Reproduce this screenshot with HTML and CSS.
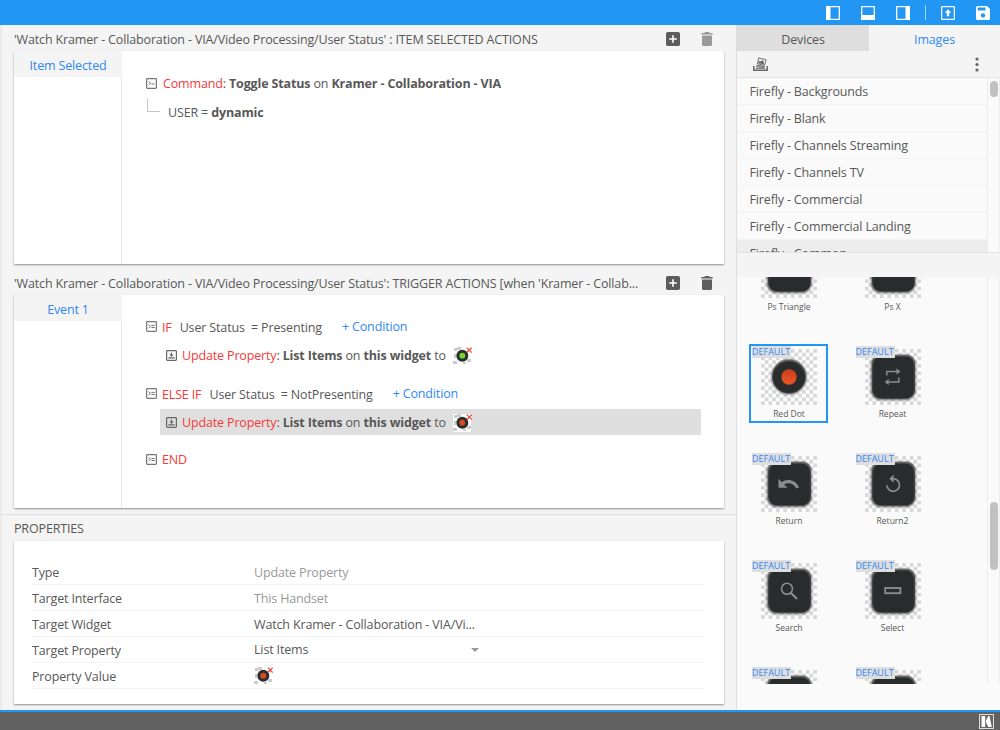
FILE: index.html
```html
<!DOCTYPE html>
<html lang="en">
<head>
<meta charset="utf-8">
<title>Builder</title>
<link rel="stylesheet" href="styles.css">
</head>
<body>
<svg class="defs" width="0" height="0" aria-hidden="true">
  <defs>
    <pattern id="check" width="7.46" height="7.46" patternUnits="userSpaceOnUse">
      <rect width="7.46" height="7.46" fill="#fff"/>
      <rect width="3.73" height="3.73" fill="#d8d8d8"/>
      <rect x="3.73" y="3.73" width="3.73" height="3.73" fill="#d8d8d8"/>
    </pattern>
    <linearGradient id="rim" x1="0" y1="0" x2="0" y2="1">
      <stop offset="0" stop-color="#666"/><stop offset=".3" stop-color="#444"/><stop offset="1" stop-color="#3c3e3e"/>
    </linearGradient>
    <linearGradient id="glow" x1="0" y1="0" x2="0" y2="1">
      <stop offset="0" stop-color="#c8401c"/><stop offset="1" stop-color="#ee5424"/>
    </linearGradient>
    <filter id="soft" x="-20%" y="-20%" width="140%" height="140%"><feGaussianBlur stdDeviation=".9"/></filter>
    <symbol id="key" viewBox="0 0 56 56">
      <rect width="56" height="56" fill="url(#check)"/>
      <rect x="6" y="6" width="44.500" height="45" rx="9" fill="#444" opacity=".85" filter="url(#soft)"/>
      <rect x="7" y="5.800" width="43" height="43" rx="8.500" fill="url(#rim)"/>
      <rect x="8.300" y="7.500" width="40.400" height="42" rx="8" fill="#282c2d"/>
    </symbol>
    <symbol id="add" viewBox="0 0 14 14">
      <rect width="14" height="14" rx="1.800" fill="#5c5c5c"/><path d="M7 3.200v7.600M3.200 7h7.600" stroke="#fff" stroke-width="1.600"/>
    </symbol>
    <symbol id="trash" viewBox="0 0 12 14">
      <path d="M.3.9h3L4.200 0h3.600l.9.9h3v1.600H.3zM1 3.500h10v9A1.500 1.500 0 0 1 9.500 14h-7A1.500 1.500 0 0 1 1 12.500z" fill="currentColor"/>
    </symbol>
    <symbol id="cmd" viewBox="0 0 11 11">
      <rect x=".6" y=".6" width="9.800" height="9.800" rx=".8" fill="#fff" stroke="#777" stroke-width="1.200"/>
      <path d="M2.600 3.600 4.600 5.300 2.600 7M5.500 6h3" fill="none" stroke="#777"/>
    </symbol>
    <symbol id="logic" viewBox="0 0 11 11">
      <rect x=".6" y=".6" width="9.800" height="9.800" rx=".8" fill="#fff" stroke="#777" stroke-width="1.200"/>
      <path d="M2.500 3.600 4.600 5.300 2.500 7M5.400 4.400h3.400M5.400 6.500h3.400" fill="none" stroke="#777"/>
    </symbol>
    <symbol id="prop" viewBox="0 0 11 11">
      <rect x=".6" y=".6" width="9.800" height="9.800" rx=".8" fill="none" stroke="#666" stroke-width="1.200"/>
      <path d="M2.300 7.800h6.400M5.500 2.500v2.500" stroke="#666" stroke-width="1.200"/><path d="M3.300 4.500h4.400L5.500 7z" fill="#666"/>
    </symbol>
    <symbol id="dot" viewBox="0 0 19 19">
      <rect x="0" y="1" width="18" height="18" fill="#fff"/>
      <path d="M1 2h3v3H1zM4 1h4v3H4zM1 8h2v4H1zM0 15h4v3H0zM14 13h4v3h-4zM10 16h3v2h-3z" fill="#ccc"/>
      <circle cx="9.300" cy="9.700" r="6" fill="#2c2f30"/><circle cx="9.300" cy="9.700" r="2.900" fill="currentColor"/>
      <path d="m13.800 1.600 4.900 4.900m0-4.900-4.900 4.900" stroke="#ef4438" stroke-width="1.200"/>
    </symbol>
  </defs>
</svg>

<header class="topbar">
  <svg width="14" height="14" viewBox="0 0 14 14"><path fill="none" stroke="#fff" stroke-width="1.300" d="M.7.7h12.600v12.600H.7z"/><path fill="#fff" d="M0 0h4.500v14H0z"/></svg>
  <svg width="14" height="14" viewBox="0 0 14 14"><path fill="none" stroke="#fff" stroke-width="1.300" d="M.7.7h12.600v12.600H.7z"/><path fill="#fff" d="M0 9h14v5H0z"/></svg>
  <svg width="14" height="14" viewBox="0 0 14 14"><path fill="none" stroke="#fff" stroke-width="1.300" d="M.7.7h12.600v12.600H.7z"/><path fill="#fff" d="M9.500 0H14v14H9.500z"/></svg>
  <span class="topbar-divider"></span>
  <svg width="14" height="14" viewBox="0 0 14 14"><rect x=".6" y=".6" width="12.800" height="12.800" rx="1" fill="none" stroke="#fff" stroke-width="1.300"/><path fill="#fff" d="M7 3.200 10.300 6.800H8.200v3.400H5.800V6.800H3.700z"/></svg>
  <svg width="14" height="14" viewBox="0 0 14 14"><path fill="#fff" fill-rule="evenodd" d="M1.500 0H11l3 3v9.500a1.500 1.500 0 0 1-1.500 1.500h-11A1.500 1.500 0 0 1 0 12.500v-11A1.500 1.500 0 0 1 1.500 0zM1.700 1.600v3h7.700v-3zM7 7.200a2.200 2.200 0 1 0 .01 0z"/></svg>
</header>

<main class="main">
  <section class="workspace">
    <div class="section-head">
      <h2 class="title">'Watch Kramer - Collaboration - VIA/Video Processing/User Status' : ITEM SELECTED ACTIONS</h2>
      <svg class="ic-add"><use href="#add"/></svg><svg class="ic-trash disabled"><use href="#trash"/></svg>
    </div>
    <div class="panel">
      <div class="tabs-col"><div class="tab">Item Selected</div></div>
      <div class="actions first">
        <div class="line"><svg class="ic"><use href="#cmd"/></svg><span class="txt command"><em>Command</em>: <b>Toggle Status</b> on <b>Kramer - Collaboration - VIA</b></span></div>
        <div class="line arg"><i class="elbow"></i><span class="txt">USER = <b>dynamic</b></span></div>
      </div>
    </div>

    <div class="section-head second">
      <h2 class="title">'Watch Kramer - Collaboration - VIA/Video Processing/User Status': TRIGGER ACTIONS [when 'Kramer - Collab...</h2>
      <svg class="ic-add"><use href="#add"/></svg><svg class="ic-trash"><use href="#trash"/></svg>
    </div>
    <div class="panel">
      <div class="tabs-col"><div class="tab">Event 1</div></div>
      <div class="actions">
        <div class="line"><svg class="ic"><use href="#logic"/></svg><em class="word">IF</em><span class="cond">User Status&nbsp; = Presenting</span><a class="add-cond">+ Condition</a></div>
        <div class="line sub"><svg class="ic"><use href="#prop"/></svg><span class="txt"><em>Update Property</em>: <b>List Items</b> on <b>this widget</b> to</span><svg class="dot green"><use href="#dot"/></svg></div>
        <div class="line"><svg class="ic"><use href="#logic"/></svg><em class="word">ELSE IF</em><span class="cond">User Status&nbsp; = NotPresenting</span><a class="add-cond">+ Condition</a></div>
        <div class="line sub selected"><svg class="ic"><use href="#prop"/></svg><span class="txt"><em>Update Property</em>: <b>List Items</b> on <b>this widget</b> to</span><svg class="dot"><use href="#dot"/></svg></div>
        <div class="line end"><svg class="ic"><use href="#logic"/></svg><em class="word">END</em></div>
      </div>
    </div>

    <div class="section-head props-head"><h2 class="title">PROPERTIES</h2></div>
    <div class="panel props">
      <div class="row"><span class="label">Type</span><span class="muted">Update Property</span></div>
      <div class="row"><span class="label">Target Interface</span><span class="muted">This Handset</span></div>
      <div class="row"><span class="label">Target Widget</span><span>Watch Kramer - Collaboration - VIA/Vi...</span></div>
      <div class="row"><span class="label">Target Property</span><span class="select">List Items<i class="caret"></i></span></div>
      <div class="row"><span class="label">Property Value</span><svg class="dot"><use href="#dot"/></svg></div>
    </div>
  </section>

  <aside class="sidebar">
    <nav class="side-tabs"><div class="side-tab inactive">Devices</div><div class="side-tab">Images</div></nav>
    <div class="tools">
      <svg width="15" height="14" viewBox="0 0 15 14"><path d="M.8 9v4.200h13.400V9" fill="none" stroke="#666" stroke-width="1.500"/><path d="M2.800 11.300h9.200M3 9.700l8.500.7M3.600 8.200l8 1.300" stroke="#666" stroke-width="1"/><path d="m5.800.8 7.400 2-1.700 5.800-7.200-2z" fill="#eee" stroke="#666" stroke-width=".9"/><path d="m5 6 1.900-2.500 1 1.100L10 3l1.300 4.700z" fill="#666"/></svg>
      <svg width="4" height="15" viewBox="0 0 4 15" fill="#666"><circle cx="2" cy="2" r="1.600"/><circle cx="2" cy="7.500" r="1.600"/><circle cx="2" cy="13" r="1.600"/></svg>
    </div>
    <div class="scroller folders">
      <div class="list">
        <div class="item">Firefly - Backgrounds</div>
        <div class="item">Firefly - Blank</div>
        <div class="item">Firefly - Channels Streaming</div>
        <div class="item">Firefly - Channels TV</div>
        <div class="item">Firefly - Commercial</div>
        <div class="item">Firefly - Commercial Landing</div>
        <div class="item current">Firefly - Common</div>
      </div>
      <div class="track"><div class="thumb thumb-top"></div></div>
    </div>
    <div class="band"></div>
    <div class="scroller gallery">
      <div class="grid">
        <div class="tile"><svg class="pic"><use href="#key"/></svg><span class="cap">Ps Triangle</span></div>
        <div class="tile"><svg class="pic"><use href="#key"/></svg><span class="cap">Ps X</span></div>
        <div class="tile active"><svg class="pic" viewBox="0 0 56 56"><rect width="56" height="56" fill="url(#check)"/><circle cx="28" cy="28" r="17.800" fill="#666" opacity=".8" filter="url(#soft)"/><circle cx="28" cy="27.500" r="17" fill="url(#rim)"/><circle cx="28" cy="28" r="15.700" fill="#282c2d"/><circle cx="28" cy="28" r="7.700" fill="url(#glow)"/></svg><span class="badge">DEFAULT</span><span class="cap">Red Dot</span></div>
        <div class="tile"><svg class="pic" viewBox="0 0 56 56"><use href="#key"/><path d="M21.800 26.500v-4h10.500M33.800 28.500v4.500H23.300" fill="none" stroke="#8a8a8a" stroke-width="1.500"/><path d="m31.500 19.300 4 3.200-4 3.200zM23.700 29.800l-4 3.200 4 3.200z" fill="#8a8a8a"/></svg><span class="badge">DEFAULT</span><span class="cap">Repeat</span></div>
        <div class="tile"><svg class="pic" viewBox="0 0 56 56"><use href="#key"/><path d="M17.500 22.800v9h9l-3.500-3.300c3.800-2.600 9.700-1.600 12.200 4l2.800-1.100c-3.500-8-12.500-9-17.200-5.200z" fill="#8c8c8c"/></svg><span class="badge">DEFAULT</span><span class="cap">Return</span></div>
        <div class="tile"><svg class="pic" viewBox="0 0 56 56"><use href="#key"/><path d="M28.300 22.700a6.300 6.300 0 1 1-6.400 6.600" fill="none" stroke="#8c8c8c" stroke-width="1.700"/><path d="M28.600 18.500v8.300l-4.300-4.100z" fill="#8c8c8c"/></svg><span class="badge">DEFAULT</span><span class="cap">Return2</span></div>
        <div class="tile"><svg class="pic" viewBox="0 0 56 56"><use href="#key"/><circle cx="26" cy="25.800" r="5.500" fill="none" stroke="#8c8c8c" stroke-width="1.600"/><path d="m30 30 6 6" stroke="#8c8c8c" stroke-width="2.100"/></svg><span class="badge">DEFAULT</span><span class="cap">Search</span></div>
        <div class="tile"><svg class="pic" viewBox="0 0 56 56"><use href="#key"/><rect x="20.200" y="25" width="15.200" height="5.200" fill="none" stroke="#8a8a8a" stroke-width="1.900"/></svg><span class="badge">DEFAULT</span><span class="cap">Select</span></div>
        <div class="tile"><svg class="pic"><use href="#key"/></svg><span class="badge">DEFAULT</span></div>
        <div class="tile"><svg class="pic"><use href="#key"/></svg><span class="badge">DEFAULT</span></div>
      </div>
      <div class="track"><div class="thumb thumb-low"></div></div>
    </div>
  </aside>
</main>
<footer class="footer">
  <svg width="15" height="15" viewBox="0 0 15 15"><rect x=".5" y=".5" width="14" height="14" fill="#666" stroke="#ddd"/><path d="M2.500 2h3.700v11H2.500zM7 6.500 9.300 2h1.200l2.300 11H9.300L7 8.500z" fill="#fff"/></svg>
</footer>
</body>
</html>
```
FILE: styles.css
```css
* { box-sizing: border-box; }
body {
  margin: 0;
  width: 1000px;
  height: 730px;
  overflow: hidden;
  display: flex;
  flex-direction: column;
  background: #f4f4f4;
  color: #585858;
  font: 12.5px/20px "Open Sans", sans-serif;
  letter-spacing: -.15px;
}
svg { display: block; flex: none; }
.defs { position: absolute; }
em { font-style: normal; color: #f43a3a; }
b { font-weight: 700; }

.topbar {
  height: 25px;
  flex: none;
  background: #2196f3;
  display: flex;
  align-items: center;
  justify-content: flex-end;
  gap: 21px;
  padding: 1px 10px 0 0;
}
.topbar-divider { width: 1px; height: 15px; background: #a6d5fa; margin: -2px -6px 0 -6px; }

.main { flex: 1; min-height: 0; display: flex; }

.workspace {
  width: 737px;
  flex: none;
  display: flex;
  flex-direction: column;
  border-left: 2px solid #e9e9e9;
  border-right: 1px solid #dedede;
}
.section-head { height: 26px; flex: none; display: flex; align-items: center; padding: 2px 0 0 12px; }
.section-head.second { height: 31px; padding-top: 7px; }
.title { margin: 0; padding-top: 1px; width: 652px; flex: none; font-size: 12.5px; font-weight: 400; white-space: nowrap; }
.ic-add { width: 14px; height: 14px; }
.ic-trash { width: 12px; height: 14px; margin-left: 21px; color: #5e5e5e; }
.disabled { color: #999; }

.panel {
  width: 710px;
  height: 213px;
  flex: none;
  margin-left: 12px;
  display: flex;
  background: #fff;
  border-radius: 1px;
  box-shadow: 0 1px 2px rgba(0, 0, 0, .42);
}
.tabs-col { width: 108px; flex: none; border-right: 1px solid #e8e8e8; }
.tab { width: 108px; height: 26px; background: #f4f4f4; color: #3088f5; line-height: 29px; text-align: center; }

.actions { flex: 1; padding: 18px 23px 0 24px; white-space: nowrap; }
.actions.first { padding-top: 19px; }
.line { height: 28px; display: flex; align-items: center; }
.ic { width: 11px; height: 11px; margin: -1px 5px 0 0; }
.txt { padding-top: 1px; }
.command { padding: 0 0 1px 1px; }
.arg { align-items: flex-start; padding-left: 1px; }
.elbow { width: 13px; height: 13px; margin: 1px 8px 0 0; border: solid #c4c4c4; border-width: 0 0 1px 1px; }
.arg .txt { padding-top: 5px; }
.word { padding-top: 2px; }
.cond { margin-left: 8px; padding-top: 2px; }
.add-cond { margin-left: 20px; color: #3088f5; }
.sub { height: 26px; margin: 1px 0 12px 14px; padding-left: 6px; }
.sub .txt { padding-top: 2px; }
.sub .ic { margin-top: 1px; }
.selected { background: #dfdfdf; }
.dot { width: 19px; height: 19px; margin-left: 7px; color: #dd4a20; }
.green { color: #76d62a; }
.end { margin-top: -2px; }
.end .ic { margin-top: 0; }

.props-head { height: 27px; margin-top: 6px; border-top: 1px solid #e0e0e0; padding-top: 0; }
.props { height: 163px; display: block; padding: 18px 20px 0 18px; }
.row { height: 26px; display: flex; align-items: center; border-bottom: 1px solid #f3f3f3; padding-top: 3px; }
.label { width: 222px; }
.muted { color: #999; }
.select { width: 225px; display: flex; align-items: center; justify-content: space-between; padding-bottom: 2px; }
.caret { border: solid transparent; border-width: 4px 4px 0; border-top-color: #999; }
.props .dot { margin: -3px 0 0; }

.sidebar { flex: 1; display: flex; flex-direction: column; background: #fafafa; }
.side-tabs { height: 26px; flex: none; display: flex; background: #f4f4f4; }
.side-tab { width: 131px; text-align: center; line-height: 29px; color: #3088f5; }
.inactive { width: 132px; background: #dedede; color: #585858; }
.tools { height: 27px; flex: none; display: flex; align-items: center; justify-content: space-between; padding: 0 21px 0 16px; background: #f4f4f4; border-bottom: 1px solid #e4e4e4; }
.scroller { flex: none; display: flex; overflow: hidden; }
.folders { height: 174px; }
.list { flex: 1; }
.item { height: 27px; line-height: 28px; padding-left: 12.5px; border-bottom: 1px solid #f3f3f3; }
.current { background: #ededed; }
.track { width: 13px; flex: none; border-left: 1px solid #ececec; border-right: 1px solid #eee; padding-left: 2px; }
.thumb { width: 8px; border-radius: 4px; background: #c1c1c1; }
.thumb-top { height: 16px; margin-top: 3px; }
.thumb-low { height: 68px; margin-top: 225px; }
.band { height: 25px; flex: none; background: #f4f4f4; border-top: 1px solid #e3e3e3; }
.gallery { height: 407px; }
.grid { flex: 1; display: grid; grid-template-columns: 79px 79px; grid-auto-rows: 79px; gap: 28px 24.5px; padding-left: 12px; margin-top: -40px; align-content: start; }
.tile { position: relative; padding: 5px 0 0 12px; }
.tile.active { border: 2px solid #2196f3; padding: 3px 0 0 10px; }
.pic { width: 56px; height: 56px; }
.cap { display: block; width: 56px; text-align: center; white-space: nowrap; font-size: 8.5px; line-height: 18px; letter-spacing: 0; }
.badge { position: absolute; left: 3px; top: 2px; width: 39px; height: 12px; background: #dedede; color: #3088f5; font-size: 9px; line-height: 12px; letter-spacing: 0; white-space: nowrap; }
.active .badge { left: 1px; top: 0; }

.footer { height: 20px; flex: none; display: flex; align-items: center; justify-content: flex-end; padding-right: 6px; background: #616161; border-top: 2px solid #2196f3; }
```
